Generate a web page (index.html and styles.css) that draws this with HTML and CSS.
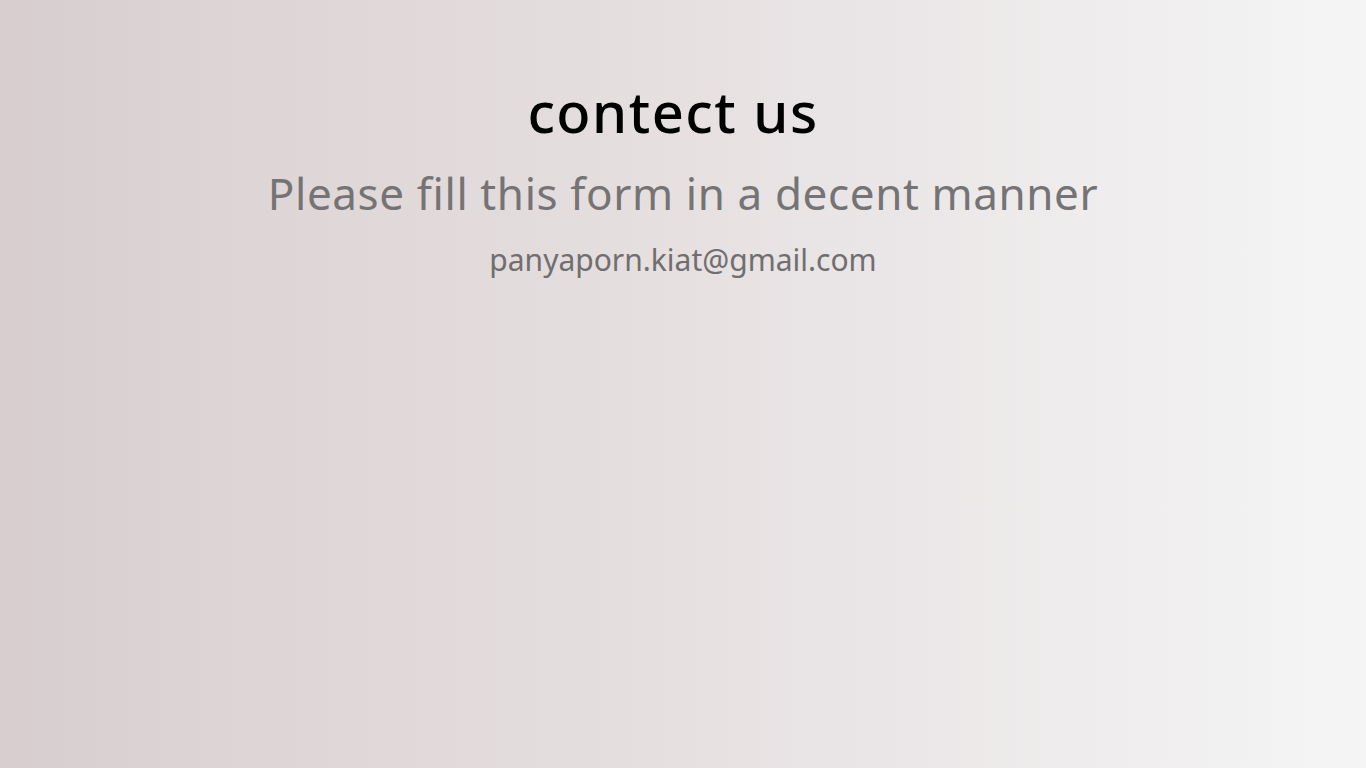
FILE: index.html
```html
<!DOCTYPE html>
<html lang="en">
<head>
<meta charset="utf-8">
<title>contect us</title>
<link rel="stylesheet" href="styles.css">
</head>
<body>
<main class="contact">
  <h1 class="contact-title">contect us</h1>
  <p class="contact-subtitle">Please fill this form in a decent manner</p>
  <p class="contact-email">panyaporn.kiat@gmail.com</p>
</main>
</body>
</html>
```
FILE: styles.css
```css
html, body {
  margin: 0;
  padding: 0;
  height: 100%;
}
body {
  background: linear-gradient(to right, #d8cecf 0%, #e6e0e1 50%, #f5f5f5 100%);
  font-family: "Noto Sans", "DejaVu Sans", sans-serif;
  overflow: hidden;
}
.contact {
  display: flex;
  flex-direction: column;
  align-items: center;
  padding-top: 77px;
}
.contact-title {
  margin: 0;
  font-size: 56px;
  font-weight: 500;
  line-height: 68px;
  color: #000;
  letter-spacing: 1.5px;
  padding-right: 20px;
}
.contact-subtitle {
  margin: 20px 0 0;
  font-size: 44px;
  font-weight: 400;
  line-height: 56px;
  color: #757373;
  letter-spacing: 0.6px;
}
.contact-email {
  margin: 21px 0 0;
  font-size: 30px;
  font-weight: 400;
  line-height: 36px;
  color: #706e6e;
}
```
